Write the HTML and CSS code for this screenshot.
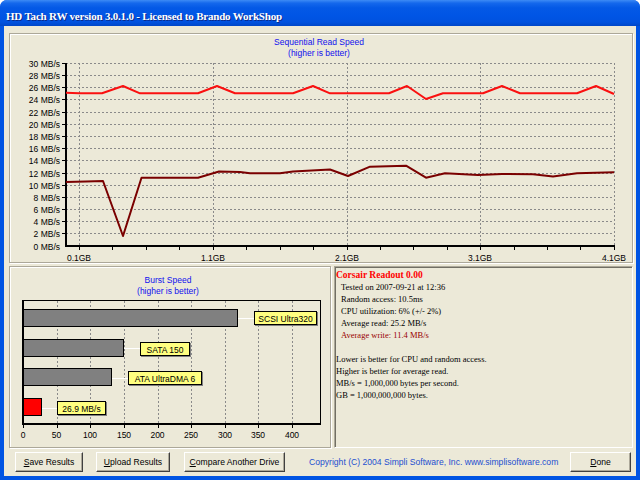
FILE: index.html
```html
<!DOCTYPE html>
<html>
<head>
<meta charset="utf-8">
<title>HD Tach RW</title>
<link rel="stylesheet" href="styles.css">
</head>
<body>
<div class="window">
  <div class="titlebar"><span class="title">HD Tach RW version 3.0.1.0 - Licensed to Brando WorkShop</span></div>
  <div class="client">
    <section class="panel panel-top">
      <svg class="chart" width="622" height="228" viewBox="10 34 622 228">
        <text class="ctitle" x="319" y="44.5">Sequential Read Speed</text>
        <text class="ctitle" x="319" y="55.5">(higher is better)</text>
        <g class="grid">
          <line x1="66" y1="63.5" x2="614" y2="63.5"/>
          <line x1="66" y1="75.5" x2="614" y2="75.5"/>
          <line x1="66" y1="87.5" x2="614" y2="87.5"/>
          <line x1="66" y1="99.5" x2="614" y2="99.5"/>
          <line x1="66" y1="112.5" x2="614" y2="112.5"/>
          <line x1="66" y1="124.5" x2="614" y2="124.5"/>
          <line x1="66" y1="136.5" x2="614" y2="136.5"/>
          <line x1="66" y1="148.5" x2="614" y2="148.5"/>
          <line x1="66" y1="160.5" x2="614" y2="160.5"/>
          <line x1="66" y1="173.5" x2="614" y2="173.5"/>
          <line x1="66" y1="185.5" x2="614" y2="185.5"/>
          <line x1="66" y1="197.5" x2="614" y2="197.5"/>
          <line x1="66" y1="209.5" x2="614" y2="209.5"/>
          <line x1="66" y1="221.5" x2="614" y2="221.5"/>
          <line x1="66" y1="233.5" x2="614" y2="233.5"/>
          <line x1="79.5" y1="63" x2="79.5" y2="246"/>
          <line x1="213.5" y1="63" x2="213.5" y2="246"/>
          <line x1="347.5" y1="63" x2="347.5" y2="246"/>
          <line x1="480.5" y1="63" x2="480.5" y2="246"/>
          <line x1="614.5" y1="63" x2="614.5" y2="246"/>
        </g>
        <g class="ylab">
          <text x="60" y="66.5">30 MB/s</text>
          <text x="60" y="78.5">28 MB/s</text>
          <text x="60" y="90.5">26 MB/s</text>
          <text x="60" y="102.5">24 MB/s</text>
          <text x="60" y="115.5">22 MB/s</text>
          <text x="60" y="127.5">20 MB/s</text>
          <text x="60" y="139.5">18 MB/s</text>
          <text x="60" y="151.5">16 MB/s</text>
          <text x="60" y="163.5">14 MB/s</text>
          <text x="60" y="176.5">12 MB/s</text>
          <text x="60" y="188.5">10 MB/s</text>
          <text x="60" y="200.5">8 MB/s</text>
          <text x="60" y="212.5">6 MB/s</text>
          <text x="60" y="224.5">4 MB/s</text>
          <text x="60" y="236.5">2 MB/s</text>
          <text x="60" y="249.5">0 MB/s</text>
        </g>
        <g class="ticks">
          <path d="M62 63.5h4M62 75.5h4M62 87.5h4M62 99.5h4M62 112.5h4M62 124.5h4M62 136.5h4M62 148.5h4M62 160.5h4M62 173.5h4M62 185.5h4M62 197.5h4M62 209.5h4M62 221.5h4M62 233.5h4"/>
          <path d="M79.5 247v3M112.5 247v3M146.5 247v3M179.5 247v3M213.5 247v3M246.5 247v3M280.5 247v3M313.5 247v3M347.5 247v3M380.5 247v3M413.5 247v3M447.5 247v3M480.5 247v3M514.5 247v3M547.5 247v3M580.5 247v3M614.5 247v3"/>
        </g>
        <path class="axis" d="M66 63V247M65 246H615"/>
        <polyline class="read" points="66,92.7 79,93.3 102,93.3 123,86 140,93.3 198,93.3 217,86 235,93.3 293,93.3 313,86 330,93.3 389,93.3 407,86 426,99 443,93.3 483,93.3 502,86 520,93.3 577,93.3 596,86 614,94"/>
        <polyline class="write" points="66,182 86,181.5 103,181 123,236 141.5,177.7 198,177.7 219,171.5 240,172 250,173.3 280,173.3 293,171.5 330,169.5 348,176 370,166.7 406,165.7 426,177.7 445,173.3 478,175 502,174 533,174.3 553,176.5 577,173.3 614,172.3"/>
        <g class="xlab">
          <text x="79" y="260.5">0.1GB</text>
          <text x="213" y="260.5">1.1GB</text>
          <text x="347" y="260.5">2.1GB</text>
          <text x="480" y="260.5">3.1GB</text>
          <text x="614" y="260.5">4.1GB</text>
        </g>
      </svg>
    </section>
    <div class="row">
      <section class="panel panel-burst">
        <svg class="chart" width="320" height="180" viewBox="10 267 320 180">
          <text class="ctitle" x="168" y="283">Burst Speed</text>
          <text class="ctitle" x="168" y="293.5">(higher is better)</text>
          <g class="grid">
            <line x1="57.5" y1="301" x2="57.5" y2="424"/>
            <line x1="90.5" y1="301" x2="90.5" y2="424"/>
            <line x1="124.5" y1="301" x2="124.5" y2="424"/>
            <line x1="158.5" y1="301" x2="158.5" y2="424"/>
            <line x1="191.5" y1="301" x2="191.5" y2="424"/>
            <line x1="225.5" y1="301" x2="225.5" y2="424"/>
            <line x1="258.5" y1="301" x2="258.5" y2="424"/>
            <line x1="292.5" y1="301" x2="292.5" y2="424"/>
          </g>
          <rect class="frame" x="22.5" y="300.5" width="298" height="124"/>
          <path class="axis" d="M23 301V425M22 424H321"/>
          <g class="ticks">
            <path d="M23.5 425v3M57.5 425v3M90.5 425v3M124.5 425v3M158.5 425v3M191.5 425v3M225.5 425v3M258.5 425v3M292.5 425v3"/>
          </g>
          <g class="connect">
            <path d="M238 318.5H254M124 348.5H140M112 378.5H128M42 408.5H57"/>
          </g>
          <rect class="bar" x="23.5" y="309.5" width="214" height="17"/>
          <rect class="bar" x="23.5" y="339.5" width="100" height="17"/>
          <rect class="bar" x="23.5" y="368.5" width="88" height="17"/>
          <rect class="bar mine" x="23.5" y="398.5" width="18" height="17"/>
          <g class="tag">
            <rect class="shadow" x="255.5" y="312.5" width="62" height="13"/>
            <rect x="254.5" y="311.5" width="62" height="13"/>
            <text x="285.5" y="321.5">SCSI Ultra320</text>
          </g>
          <g class="tag">
            <rect class="shadow" x="141.5" y="343.5" width="49" height="13"/>
            <rect x="140.5" y="342.5" width="49" height="13"/>
            <text x="165" y="352.5">SATA 150</text>
          </g>
          <g class="tag">
            <rect class="shadow" x="129.5" y="372.5" width="73" height="13"/>
            <rect x="128.5" y="371.5" width="73" height="13"/>
            <text x="165" y="381.5">ATA UltraDMA 6</text>
          </g>
          <g class="tag">
            <rect class="shadow" x="58.5" y="402.5" width="48" height="13"/>
            <rect x="57.5" y="401.5" width="48" height="13"/>
            <text x="81.5" y="411.5">26.9 MB/s</text>
          </g>
          <g class="xlab">
            <text x="23" y="438.3">0</text>
            <text x="56.5" y="438.3">50</text>
            <text x="90" y="438.3">100</text>
            <text x="124" y="438.3">150</text>
            <text x="157.5" y="438.3">200</text>
            <text x="191" y="438.3">250</text>
            <text x="225" y="438.3">300</text>
            <text x="258" y="438.3">350</text>
            <text x="292" y="438.3">400</text>
          </g>
        </svg>
      </section>
      <section class="readout">
        <div class="rhead">Corsair Readout 0.00</div>
        <div class="ind">Tested on 2007-09-21 at 12:36</div>
        <div class="ind">Random access: 10.5ms</div>
        <div class="ind">CPU utilization: 6% (+/- 2%)</div>
        <div class="ind">Average read: 25.2 MB/s</div>
        <div class="ind write-line">Average write: 11.4 MB/s</div>
        <div class="blank"></div>
        <div>Lower is better for CPU and random access.</div>
        <div>Higher is better for average read.</div>
        <div>MB/s = 1,000,000 bytes per second.</div>
        <div>GB = 1,000,000,000 bytes.</div>
      </section>
    </div>
    <div class="buttons">
      <button class="btn btn-save"><u>S</u>ave Results</button>
      <button class="btn btn-upload"><u>U</u>pload Results</button>
      <button class="btn btn-compare"><u>C</u>ompare Another Drive</button>
      <span class="copyright">Copyright (C) 2004 Simpli Software, Inc. www.simplisoftware.com</span>
      <button class="btn btn-done"><u>D</u>one</button>
    </div>
  </div>
</div>
</body>
</html>
```

FILE: styles.css
```css
html, body {
  margin: 0;
  padding: 0;
  background: #ffffff;
}

.window {
  width: 640px;
  height: 480px;
  display: flex;
  flex-direction: column;
  border-radius: 7px 7px 0 0;
  overflow: hidden;
  background: #0054e3;
}

.titlebar {
  height: 26px;
  flex: none;
  box-sizing: border-box;
  padding: 11px 0 0 6px;
  background: linear-gradient(to bottom, #3d8bf5 0%, #1468ec 12%, #0459e6 30%, #0055e5 60%, #0052df 85%, #0047c8 100%);
}

.title {
  display: block;
  font: bold 11px/11px "Liberation Serif", serif;
  letter-spacing: -0.2px;
  color: #ffffff;
  text-shadow: 1px 1px 0 #0a2a8a;
  white-space: nowrap;
}

.client {
  flex: 1;
  display: flex;
  flex-direction: column;
  background: #ece9d8;
  border-style: solid;
  border-color: #0054e3;
  border-width: 0 4px 4px 4px;
  padding: 7px 3px 0 5px;
}

.panel {
  box-sizing: border-box;
  border: 1px solid #aca899;
  box-shadow: inset 1px 1px 0 #ffffff, 1px 1px 0 #ffffff;
}

.panel-top {
  height: 230px;
  flex: none;
}

.chart {
  display: block;
  font-family: "Liberation Sans", Arial, sans-serif;
  font-size: 8.5px;
}

.ctitle {
  fill: #1010ee;
  text-anchor: middle;
}

.grid line {
  stroke: #8a8a8a;
  stroke-width: 1;
  stroke-dasharray: 2 2;
}

.ylab text {
  text-anchor: end;
  fill: #000000;
}

.xlab text {
  text-anchor: middle;
  fill: #000000;
}

.ticks path {
  stroke: #000000;
  stroke-width: 1;
  fill: none;
}

.axis {
  stroke: #000000;
  stroke-width: 2;
  fill: none;
}

.read {
  fill: none;
  stroke: #fa1010;
  stroke-width: 2;
  stroke-linejoin: round;
}

.write {
  fill: none;
  stroke: #7a0000;
  stroke-width: 2;
  stroke-linejoin: round;
}

.frame {
  fill: none;
  stroke: #000000;
  stroke-width: 1;
}

.connect path {
  stroke: #ffffff;
  stroke-width: 1;
  fill: none;
}

.bar {
  fill: #808080;
  stroke: #000000;
  stroke-width: 1;
}

.bar.mine {
  fill: #ff0000;
}

.tag rect {
  fill: #ffff80;
  stroke: #000000;
  stroke-width: 1;
}

.tag rect.shadow {
  fill: #808080;
  stroke: #808080;
}

.tag text {
  text-anchor: middle;
  fill: #000000;
}

.row {
  display: flex;
  gap: 3px;
  margin-top: 3px;
  height: 182px;
  flex: none;
}

.panel-burst {
  width: 322px;
  flex: none;
}

.readout {
  width: 299px;
  flex: none;
  box-sizing: border-box;
  border: 1px solid;
  border-color: #aca899 #ffffff #ffffff #aca899;
  box-shadow: inset 1px 1px 0 #716f64;
  padding: 2px 0 0 1px;
  font-family: "Liberation Serif", "Times New Roman", serif;
  font-size: 8.5px;
  line-height: 12px;
  color: #000000;
}

.rhead {
  font-weight: bold;
  font-size: 9.5px;
  color: #ff0000;
}

.ind {
  padding-left: 5px;
}

.write-line {
  color: #990000;
}

.blank {
  height: 12px;
}

.buttons {
  display: flex;
  align-items: center;
  margin-top: 4px;
  height: 20px;
  padding-right: 2px;
}

.btn {
  height: 20px;
  box-sizing: border-box;
  margin: 0;
  padding: 0;
  font-family: "Liberation Sans", Arial, sans-serif;
  font-size: 8.6px;
  color: #000000;
  background: #ece9d8;
  border: 1px solid;
  border-color: #ffffff #404040 #404040 #ffffff;
  box-shadow: inset -1px -1px 0 #aca899;
}

.btn-save {
  width: 68px;
  margin-left: 6px;
}

.btn-upload {
  width: 74px;
  margin-left: 13px;
}

.btn-compare {
  width: 101px;
  margin-left: 14px;
}

.copyright {
  margin-left: 24px;
  font-family: "Liberation Sans", Arial, sans-serif;
  font-size: 8.6px;
  color: #1d4fd0;
  white-space: nowrap;
}

.btn-done {
  width: 61px;
  margin-left: auto;
}
```
